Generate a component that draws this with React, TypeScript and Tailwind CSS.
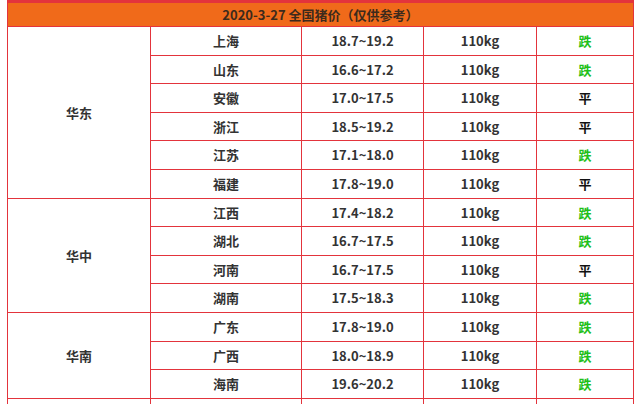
const groups = [
  {
    region: '华东',
    rows: [
      ['上海', '18.7~19.2', '跌'],
      ['山东', '16.6~17.2', '跌'],
      ['安徽', '17.0~17.5', '平'],
      ['浙江', '18.5~19.2', '平'],
      ['江苏', '17.1~18.0', '跌'],
      ['福建', '17.8~19.0', '平'],
    ],
  },
  {
    region: '华中',
    rows: [
      ['江西', '17.4~18.2', '跌'],
      ['湖北', '16.7~17.5', '跌'],
      ['河南', '16.7~17.5', '平'],
      ['湖南', '17.5~18.3', '跌'],
    ],
  },
  {
    region: '华南',
    rows: [
      ['广东', '17.8~19.0', '跌'],
      ['广西', '18.0~18.9', '跌'],
      ['海南', '19.6~20.2', '跌'],
    ],
  },
  {
    region: '',
    rows: [['', '', '']],
  },
]

const cell = 'border border-[#e3343c] text-center align-middle p-0'

export default function App() {
  return (
    <div
      className="h-[404px] w-[640px] overflow-hidden bg-white pl-[7px]"
      style={{ fontFamily: '"Noto Sans CJK SC", "Noto Sans", sans-serif' }}
    >
      <table className="w-[626px] table-fixed border-collapse border-t-[3px] border-t-[#e3343c] text-[13px] font-bold text-[#333]">
        <colgroup>
          <col className="w-[143px]" />
          <col className="w-[151px]" />
          <col className="w-[122px]" />
          <col className="w-[113px]" />
          <col className="w-[97px]" />
        </colgroup>
        <thead>
          <tr className="h-[25px]">
            <th colSpan={5} className={`${cell} bg-[#f06a1a] text-[13px] text-[#3d2a1c]`}>
              2020-3-27 全国猪价（仅供参考）
            </th>
          </tr>
        </thead>
        <tbody>
          {groups.map((g, gi) =>
            g.rows.map((r, ri) => (
              <tr key={`${gi}-${ri}`} className="h-[28.6px]">
                {ri === 0 && (
                  <td rowSpan={g.rows.length} className={cell}>
                    {g.region}
                  </td>
                )}
                <td className={cell}>{r[0]}</td>
                <td className={cell}>{r[1]}</td>
                <td className={cell}>{r[1] ? '110kg' : ''}</td>
                <td className={`${cell} ${r[2] === '跌' ? 'text-[#1fc01a]' : 'text-[#111]'}`}>{r[2]}</td>
              </tr>
            )),
          )}
        </tbody>
      </table>
    </div>
  )
}
